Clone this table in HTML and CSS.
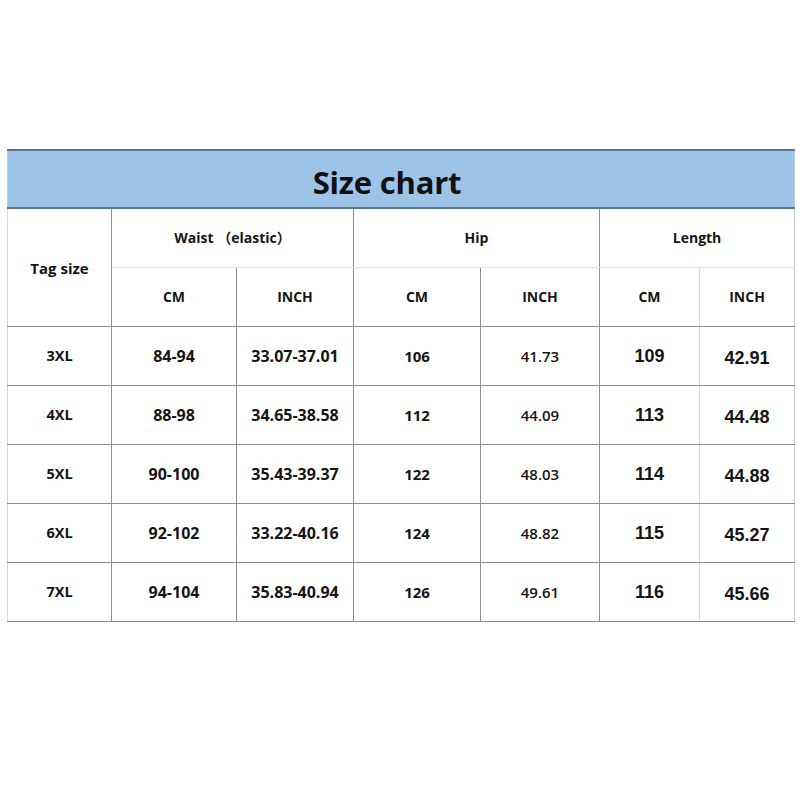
FILE: index.html
```html
<!DOCTYPE html>
<html>
<head>
<meta charset="utf-8">
<link rel="stylesheet" href="styles.css">
</head>
<body>
<div class="page">
<table class="chart">
  <colgroup>
    <col class="c1"><col class="c2"><col class="c3"><col class="c4"><col class="c5"><col class="c6"><col class="c7">
  </colgroup>
  <tr class="title-row"><td colspan="7" class="title">Size chart</td></tr>
  <tr class="sub1">
    <td rowspan="2" class="tag first">Tag size</td>
    <td colspan="2" class="grp">Waist （elastic）</td>
    <td colspan="2" class="grp">Hip</td>
    <td colspan="2" class="grp last">Length</td>
  </tr>
  <tr class="sub2">
    <td>CM</td><td>INCH</td><td>CM</td><td>INCH</td><td class="lc">CM</td><td class="last">INCH</td>
  </tr>
  <tr class="data"><td class="first sz">3XL</td><td class="num">84-94</td><td class="num">33.07-37.01</td><td class="hc">106</td><td class="hi">41.73</td><td class="lc len">109</td><td class="last len li">42.91</td></tr>
  <tr class="data"><td class="first sz">4XL</td><td class="num">88-98</td><td class="num">34.65-38.58</td><td class="hc">112</td><td class="hi">44.09</td><td class="lc len">113</td><td class="last len li">44.48</td></tr>
  <tr class="data"><td class="first sz">5XL</td><td class="num">90-100</td><td class="num">35.43-39.37</td><td class="hc">122</td><td class="hi">48.03</td><td class="lc len">114</td><td class="last len li">44.88</td></tr>
  <tr class="data"><td class="first sz">6XL</td><td class="num">92-102</td><td class="num">33.22-40.16</td><td class="hc">124</td><td class="hi">48.82</td><td class="lc len">115</td><td class="last len li">45.27</td></tr>
  <tr class="data"><td class="first sz">7XL</td><td class="num">94-104</td><td class="num">35.83-40.94</td><td class="hc">126</td><td class="hi">49.61</td><td class="lc len">116</td><td class="last len li">45.66</td></tr>
</table>
</div>
</body>
</html>
```
FILE: styles.css
```css
html, body {
  margin: 0;
  padding: 0;
  background: #ffffff;
}
.page {
  width: 800px;
  height: 800px;
  padding: 149px 0 0 7px;
  box-sizing: border-box;
}
.chart {
  border-collapse: collapse;
  table-layout: fixed;
  width: 787px;
  font-family: "Open Sans", "Noto Sans CJK SC", sans-serif;
  font-weight: 700;
  color: #151515;
}
.c1 { width: 104px; }
.c2 { width: 125px; }
.c3 { width: 117px; }
.c4 { width: 127px; }
.c5 { width: 119px; }
.c6 { width: 100px; }
.c7 { width: 95px; }
.chart td {
  border: 1px solid #8e8e8e;
  text-align: center;
  vertical-align: middle;
  padding: 0;
  font-size: 14px;
  line-height: 20px;
}
.chart .title-row td {
  height: 50px;
  background: #9dc3e6;
  border-top: 2px solid #5d718a;
  border-bottom: 2px solid #5d718a;
  border-left: 1px solid #b9cfe4;
  border-right: 1px solid #b9cfe4;
  font-size: 31px;
  line-height: 36px;
  font-weight: 700;
  letter-spacing: -0.2px;
  color: #111;
  padding-top: 6px;
  padding-right: 28px;
}
.chart .sub1 td { height: 58px; }
.chart .sub2 td { height: 58px; }
.chart .sub1 td.grp { border-bottom-color: #e2e2e2; }
.chart .sub2 td { border-top-color: #e2e2e2; }
.chart td.tag { font-size: 15px; }
.chart .data td { height: 54px; }
.chart td.first { border-left-color: #d8d8d8; }
.chart td.last { border-right-color: #c8c8c8; }
.chart td.lc { border-right-color: #dadada; }
.chart td.sz { font-size: 14.5px; }
.chart td.num { font-size: 16px; }
.chart td.hc { font-size: 15px; }
.chart td.hi { font-size: 15px; font-weight: 600; }
.chart td.len {
  font-family: "Liberation Sans", Arial, sans-serif;
  font-size: 18px;
  font-weight: 700;
}
.chart td.len.li { padding-top: 4px; }
```
